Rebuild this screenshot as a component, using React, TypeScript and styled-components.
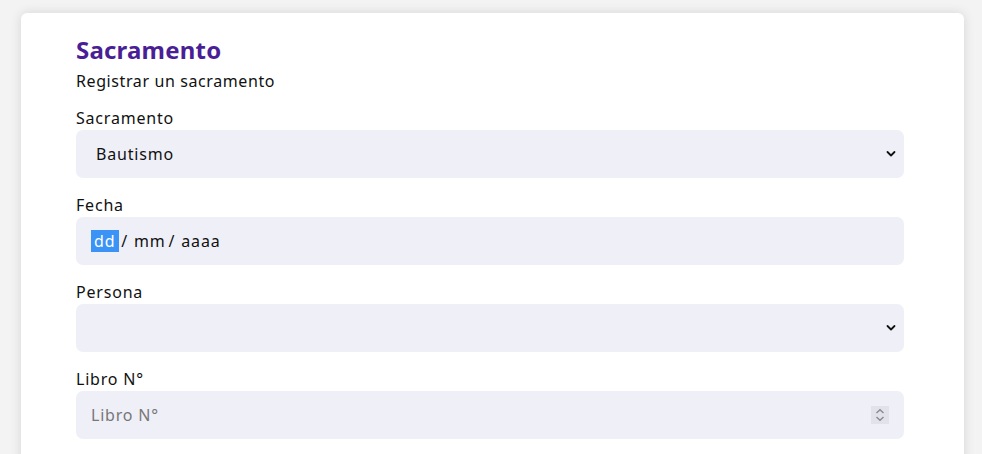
import React from 'react'
import styled, { createGlobalStyle } from 'styled-components'

const GlobalStyle = createGlobalStyle`
  html, body {
    margin: 0;
    padding: 0;
    background: #f3f3f3;
    font-family: 'Noto Sans', 'Open Sans', sans-serif;
    color: #111;
  }
  * { box-sizing: border-box; }
`;

const Page = styled.div`
  padding: 13px 18px 0 21px;
  min-height: 454px;
`;

const Card = styled.section`
  width: 943px;
  background: #fff;
  border-radius: 6px;
  box-shadow: 0 0 12px rgba(0, 0, 0, 0.12);
  padding: 21px 60px 60px 55px;
`;

const Title = styled.h2`
  margin: 0;
  font-size: 24px;
  line-height: 32px;
  font-weight: 700;
  color: #4a1f96;
  letter-spacing: 0.2px;
`;

const Subtitle = styled.p`
  margin: 4px 0 14px;
  font-size: 16px;
  line-height: 22px;
  letter-spacing: 0.6px;
`;

const Form = styled.form`
  display: flex;
  flex-direction: column;
  gap: 15px;
`;

const Field = styled.div`
  display: flex;
  flex-direction: column;
`;

const Label = styled.label`
  font-size: 16px;
  line-height: 24px;
  letter-spacing: 0.8px;
`;

const SelectWrap = styled.div`
  position: relative;
`;

const Select = styled.select`
  appearance: none;
  -webkit-appearance: none;
  display: block;
  height: 48px;
  width: 100%;
  border: none;
  border-radius: 7px;
  background: #efeff8;
  padding: 0 30px 0 20px;
  font-family: inherit;
  font-size: 16px;
  color: #111;
  letter-spacing: 0.8px;
  outline: none;
`;

const Chevron = styled.svg`
  position: absolute;
  right: 8px;
  top: 20px;
  pointer-events: none;
`;

const InputBox = styled.div`
  position: relative;
  height: 48px;
  border-radius: 7px;
  background: #efeff8;
  display: flex;
  align-items: center;
  padding: 0 15px;
  font-size: 16px;
  letter-spacing: 0.8px;
`;

const DatePart = styled.span<{ $active?: boolean }>`
  background: ${p => (p.$active ? '#3b93f5' : 'transparent')};
  color: ${p => (p.$active ? '#fff' : '#111')};
  line-height: 22px;
  padding: ${p => (p.$active ? '0 4px 0 3px' : '0 1px')};
`;

const Sep = styled.span`
  padding: 0 5px 0 2px;
`;

const NumberInput = styled.input`
  border: none;
  background: transparent;
  outline: none;
  width: 100%;
  padding: 0;
  font-family: inherit;
  font-size: 16px;
  letter-spacing: 0.8px;
  color: #111;
  &::placeholder { color: #777; }
  &::-webkit-inner-spin-button { -webkit-appearance: none; }
`;

const Spinner = styled.div`
  position: absolute;
  right: 15px;
  top: 15px;
  width: 18px;
  height: 18px;
  background: #e2e2ea;
  display: flex;
  align-items: center;
  justify-content: center;
`;

const SelectField = ({ children, value }: { children: React.ReactNode; value: string }) => (
  <SelectWrap>
    <Select defaultValue={value}>{children}</Select>
    <Chevron width="10" height="8" viewBox="0 0 10 8" fill="none" stroke="#111" strokeWidth="1.8" strokeLinecap="round" strokeLinejoin="round">
      <path d="M1.5 2 L5 5.5 L8.5 2" />
    </Chevron>
  </SelectWrap>
);

export default function App() {
  return (
    <>
      <GlobalStyle />
      <Page>
        <Card>
          <Title>Sacramento</Title>
          <Subtitle>Registrar un sacramento</Subtitle>
          <Form>
            <Field>
              <Label>Sacramento</Label>
              <SelectField value="bautismo">
                <option value="bautismo">Bautismo</option>
                <option value="confirmacion">Confirmación</option>
                <option value="matrimonio">Matrimonio</option>
              </SelectField>
            </Field>
            <Field>
              <Label>Fecha</Label>
              <InputBox>
                <DatePart $active>dd</DatePart>
                <Sep>/</Sep>
                <DatePart>mm</DatePart>
                <Sep>/</Sep>
                <DatePart>aaaa</DatePart>
              </InputBox>
            </Field>
            <Field>
              <Label>Persona</Label>
              <SelectField value="">
                <option value=""></option>
              </SelectField>
            </Field>
            <Field>
              <Label>Libro N°</Label>
              <InputBox>
                <NumberInput type="number" placeholder="Libro N°" />
                <Spinner>
                  <svg width="10" height="14" viewBox="0 0 10 14" fill="none" stroke="#8a8a96" strokeWidth="1.4">
                    <path d="M1.5 5 L5 1.8 L8.5 5" />
                    <path d="M1.5 9 L5 12.2 L8.5 9" />
                  </svg>
                </Spinner>
              </InputBox>
            </Field>
          </Form>
        </Card>
      </Page>
    </>
  )
}
